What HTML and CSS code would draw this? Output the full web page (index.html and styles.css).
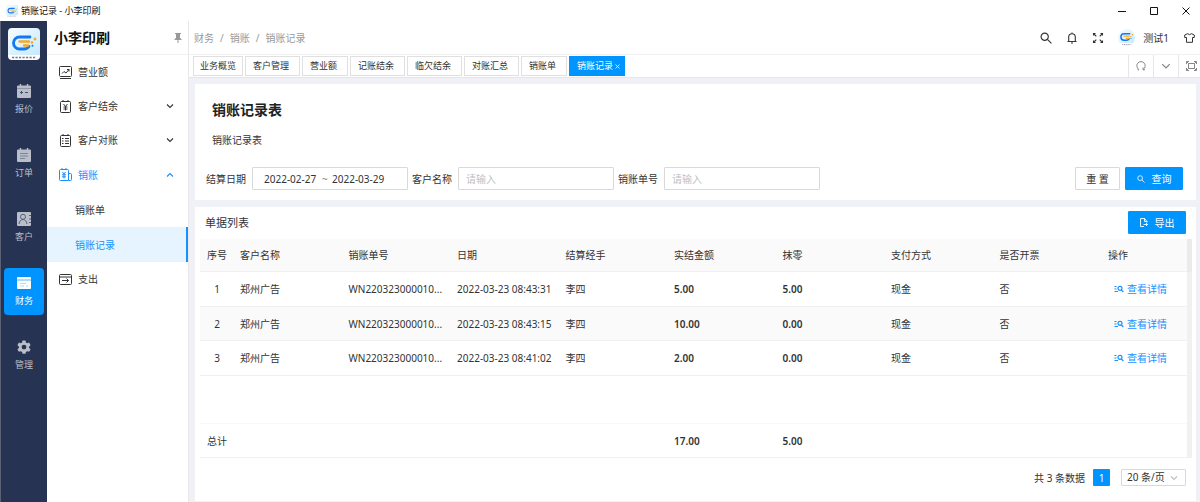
FILE: index.html
```html
<!DOCTYPE html>
<html lang="zh-CN">
<head>
<meta charset="utf-8">
<title>销账记录 - 小李印刷</title>
<link rel="stylesheet" href="styles.css">
</head>
<body>
<svg class="defs" width="0" height="0" aria-hidden="true">
  <defs>
    <linearGradient id="logo-bg" x1="0" y1="0" x2="1" y2="1">
      <stop offset="0" stop-color="#f8fdff"/><stop offset="1" stop-color="#c4e9fd"/>
    </linearGradient>
  </defs>
  <symbol id="mark" viewBox="0 0 32 32">
    <path d="M0 0h32v27H0z" fill="url(#logo-bg)"/>
    <path d="M0 27h32v5H0z" fill="#fff"/>
    <path d="M22 9H11.500a6 6 0 0 0 0 12H16c2.500 0 4-1 5-2.500" fill="none" stroke="#1677f5" stroke-width="2.800" stroke-linecap="round"/>
    <path d="M11.500 13.500H21M16 17.500h4" stroke="#f9a825" stroke-width="2.400" stroke-linecap="round" fill="none"/>
    <circle cx="24" cy="14.500" r="1.300" fill="#f9a825"/><circle cx="27" cy="11" r="1.400" fill="#f9a825"/>
    <circle cx="24.500" cy="17.800" r="1" fill="#1677f5"/>
    <path d="M4 29.500h24" stroke="#778" stroke-width="1.600" stroke-dasharray="2.200 1.300"/>
  </symbol>
  <symbol id="search" viewBox="0 0 12 12"><g fill="none" stroke="currentColor" stroke-width="1.200"><circle cx="4.700" cy="4.700" r="3.600"/><path d="M7.400 7.400l4 4"/></g></symbol>
  <symbol id="down" viewBox="0 0 8 8"><path d="M1 2.500l3 3 3-3" fill="none" stroke="currentColor" stroke-width="1.100"/></symbol>
  <symbol id="up" viewBox="0 0 8 8"><path d="M1 5.500l3-3 3 3" fill="none" stroke="currentColor" stroke-width="1.100"/></symbol>
  <symbol id="detail" viewBox="0 0 10 8"><g fill="none" stroke="currentColor" stroke-width="1.200"><path d="M.5 1.500h2M.5 4h2M.5 6.500h3.500"/><circle cx="6" cy="3.300" r="2"/><path d="M7.300 4.800l2 2.200"/></g></symbol>
</svg>

<header class="titlebar">
  <svg class="titlebar-logo"><use href="#mark"/></svg>
  <span class="titlebar-text">销账记录 - 小李印刷</span>
  <div class="window-controls">
    <button class="icon-button" aria-label="最小化"><svg width="8" height="8" viewBox="0 0 8 8"><path d="M0 4.500h8" stroke="currentColor"/></svg></button>
    <button class="icon-button" aria-label="最大化"><svg width="8" height="8" viewBox="0 0 8 8"><path d="M.5.5h7v7h-7z" fill="none" stroke="currentColor"/></svg></button>
    <button class="icon-button" aria-label="关闭"><svg width="8" height="8" viewBox="0 0 8 8"><path d="M.5.5l7 7M7.500.5l-7 7" stroke="currentColor"/></svg></button>
  </div>
</header>

<div class="app">
  <nav class="rail" aria-label="主导航">
    <svg class="rail-logo"><use href="#mark"/></svg>
    <a class="rail-item" href="#"><svg width="14" height="14" viewBox="0 0 14 14"><path d="M1 1.500h12q1 0 1 1V13q0 1-1 1H1q-1 0-1-1V2.500q0-1 1-1z" fill="currentColor"/><path d="M3.500 0v3M10.500 0v3" stroke="currentColor" stroke-width="1.500"/><path d="M0 4.500h14" stroke="#8f96a8"/><path d="M3 8.500h3M4.500 7v3M8 8.500h3" stroke="#465273"/></svg>报价</a>
    <a class="rail-item" href="#"><svg width="14" height="14" viewBox="0 0 14 14"><path d="M1 1.500h12q1 0 1 1V13q0 1-1 1H1q-1 0-1-1V2.500q0-1 1-1z" fill="currentColor"/><path d="M3.500 0v3M10.500 0v3" stroke="currentColor" stroke-width="1.500"/><path d="M3 5.500h8M3 8h8M3 10.500h5" stroke="#7b849a"/></svg>订单</a>
    <a class="rail-item" href="#"><svg width="14" height="14" viewBox="0 0 14 14"><rect width="14" height="14" rx="1" fill="currentColor"/><g fill="none" stroke="#56617f"><circle cx="6" cy="4.800" r="2.500"/><path d="M2 12c.3-3 2-4.500 4-4.500s3.700 1.500 4 4.500M12 3.500h2M12 7h2M12 10.500h2"/></g></svg>客户</a>
    <a class="rail-item rail-item-active" href="#" aria-current="page"><svg width="14" height="14" viewBox="0 0 14 14"><rect y="1" width="14" height="12" rx="1" fill="currentColor"/><path d="M0 4h14" stroke="#55b5ff"/><path d="M3 7.500h6M3 10h4M9 10h2" stroke="#a9daff"/></svg>财务</a>
    <a class="rail-item" href="#"><svg width="14" height="14" viewBox="0 0 14 14"><path fill="currentColor" fill-rule="evenodd" d="M5.500.5h3l.4 1.900 1.300.8 1.900-.6 1.500 2.600-1.500 1.300v1.400l1.500 1.300-1.500 2.600-1.900-.6-1.300.8-.4 1.800h-3l-.4-1.800-1.300-.8-1.900.6L.4 9.200l1.500-1.300V6.500L.4 5.200l1.500-2.600 1.900.6 1.300-.8zM7 4.700a2.400 2.400 0 1 0 0 4.800 2.400 2.400 0 0 0 0-4.800z"/></svg>管理</a>
  </nav>

  <aside class="sidebar">
    <div class="sidebar-head">
      <strong class="sidebar-title">小李印刷</strong>
      <button class="icon-button pin" aria-label="固定菜单"><svg width="8" height="10" viewBox="0 0 8 10"><path d="M1 0h6v1H6v4l1.500 1v1H.5V6L2 5V1H1zM3.500 7h1v3h-1z" fill="currentColor"/></svg></button>
    </div>
    <nav class="menu" aria-label="财务菜单">
      <a class="menu-item" href="#"><svg width="13" height="13" viewBox="0 0 13 13"><g fill="none" stroke="currentColor"><rect x=".5" y=".5" width="12" height="10" rx="1"/><path d="M3 7.500l2-2 2 1.500 3-3.500M8 3.500h2v2M1 12.500h11"/></g></svg>营业额</a>
      <a class="menu-item" href="#"><svg width="13" height="13" viewBox="0 0 13 13"><g fill="none" stroke="currentColor"><rect x="1.500" y="1.500" width="10" height="11" rx="1"/><path d="M4 0v2M9 0v2M4.500 4l2 2.500 2-2.500M6.500 6.500v4M4.500 7h4M4.500 9h4"/></g></svg>客户结余<svg class="menu-arrow"><use href="#down"/></svg></a>
      <a class="menu-item" href="#"><svg width="13" height="13" viewBox="0 0 13 13"><g fill="none" stroke="currentColor"><rect x="1.500" y="1.500" width="10" height="11" rx="1"/><path d="M4 0v2M9 0v2M3 4.500h1.500M6 4.500h4M3 7h1.500M6 7h4M3 9.500h1.500M6 9.500h4"/></g></svg>客户对账<svg class="menu-arrow"><use href="#down"/></svg></a>
      <a class="menu-item menu-item-open" href="#"><svg width="13" height="13" viewBox="0 0 13 13"><g fill="none" stroke="currentColor"><path d="M9.500 12.500h-8q-1 0-1-1v-9q0-1 1-1h7q1 0 1 1zM9.500 5.500h2q1 0 1 1v5q0 1-1 1h-2M3 0v2M7 0v2M3.500 4L5 6l1.500-2M5 6v4.500M3 6.800h4M3 8.800h4"/></g></svg>销账<svg class="menu-arrow"><use href="#up"/></svg></a>
      <a class="menu-item menu-sub" href="#">销账单</a>
      <a class="menu-item menu-sub menu-sub-active" href="#" aria-current="page">销账记录</a>
      <a class="menu-item" href="#"><svg width="13" height="13" viewBox="0 0 13 13"><g fill="none" stroke="currentColor"><rect x=".5" y="1.500" width="12" height="10" rx="1"/><path d="M.5 4h12M3 7.500h6.500M7.500 5.500l2 2-2 2"/></g></svg>支出</a>
    </nav>
  </aside>

  <main class="main">
    <div class="topbar">
      <nav class="breadcrumb" aria-label="面包屑"><a href="#">财务</a><span>/</span><a href="#">销账</a><span>/</span><span>销账记录</span></nav>
      <div class="topbar-tools">
        <button class="icon-button" aria-label="搜索"><svg width="12" height="12"><use href="#search"/></svg></button>
        <button class="icon-button" aria-label="通知"><svg width="12" height="12" viewBox="0 0 12 12"><path d="M1.500 9.500h9M2.700 9.500V5a3.300 3.300 0 0 1 6.600 0v4.500M6 .5v1M5 11h2" fill="none" stroke="currentColor" stroke-width="1.100"/></svg></button>
        <button class="icon-button" aria-label="全屏"><svg width="12" height="12" viewBox="0 0 12 12"><path d="M1.500 3.500v-2h2M8.500 1.500h2v2M10.500 8.500v2h-2M3.500 10.500h-2v-2M1.500 1.500L4.300 4.300M10.500 1.500L7.700 4.300M10.500 10.500L7.700 7.700M1.500 10.500l2.800-2.800" fill="none" stroke="currentColor" stroke-width="1.100"/></svg></button>
        <a class="user" href="#"><svg class="avatar"><use href="#mark"/></svg>测试1</a>
        <button class="icon-button" aria-label="主题"><svg width="11" height="10" viewBox="0 0 11 10"><path d="M3.500.7q2 1.800 4 0L10.300 2v2.500H8.500v4.800h-6V4.500H.7V2z" fill="none" stroke="currentColor"/></svg></button>
      </div>
    </div>

    <div class="tabbar">
      <nav class="tabs" aria-label="页签">
        <a class="tab tab-home" href="#">业务概览</a>
        <a class="tab" href="#">客户管理</a>
        <a class="tab" href="#">营业额</a>
        <a class="tab" href="#">记账结余</a>
        <a class="tab" href="#">临欠结余</a>
        <a class="tab" href="#">对账汇总</a>
        <a class="tab" href="#">销账单</a>
        <a class="tab tab-active" href="#" aria-current="page">销账记录<svg width="5" height="5" viewBox="0 0 5 5"><path d="M.5.5l4 4M4.500.5l-4 4" stroke="currentColor" stroke-width=".8"/></svg></a>
      </nav>
      <div class="tab-tools">
        <button class="icon-button tab-tool" aria-label="刷新"><svg width="10" height="10" viewBox="0 0 10 10"><path d="M3 8.500A4.200 4.200 0 1 1 7 8.500M7 6.500v2.300h2M3 8.800H1.500" fill="none" stroke="currentColor"/></svg></button>
        <button class="icon-button tab-tool" aria-label="更多"><svg width="10" height="10"><use href="#down"/></svg></button>
        <button class="icon-button tab-tool" aria-label="最大化内容"><svg width="11" height="10" viewBox="0 0 11 10"><path d="M.5 3V.5H3M8 .5h2.500V3M10.500 7v2.500H8M3 9.500H.5V7M2.500 2.500h6v5h-6zM.5.5l2 2M10.500.5l-2 2M.5 9.500l2-2M10.500 9.500l-2-2" fill="none" stroke="currentColor"/></svg></button>
      </div>
    </div>

    <div class="content">
      <section class="card filter-card">
        <h1 class="page-title">销账记录表</h1>
        <p class="page-note">销账记录表</p>
        <form class="filters">
          <label class="field-label" for="date-from">结算日期</label>
          <div class="control date-range">
            <input class="date-input" id="date-from" type="text" value="2022-02-27">
            <span class="date-sep">~</span>
            <input class="date-input" type="text" value="2022-03-29" aria-label="结束日期">
          </div>
          <label class="field-label" for="customer">客户名称</label>
          <input class="control" id="customer" type="text" placeholder="请输入">
          <label class="field-label" for="order-no">销账单号</label>
          <input class="control" id="order-no" type="text" placeholder="请输入">
          <div class="filter-actions">
            <button class="button" type="reset">重 置</button>
            <button class="button button-primary" type="button"><svg width="8" height="8"><use href="#search"/></svg>查询</button>
          </div>
        </form>
      </section>

      <section class="card list-card">
        <div class="list-head">
          <h2 class="list-title">单据列表</h2>
          <button class="button button-primary" type="button"><svg width="8" height="9" viewBox="0 0 8 9"><path d="M7 3.500L4.500.5H.5v8H4M4.500.5v3H7v1M3.500 6.500h4M6 5l1.500 1.500L6 8" fill="none" stroke="currentColor" stroke-width=".9"/></svg>导出</button>
        </div>
        <div class="table-wrap">
          <table class="table">
            <thead>
              <tr><th class="col-index">序号</th><th>客户名称</th><th>销账单号</th><th>日期</th><th>结算经手</th><th>实结金额</th><th>抹零</th><th>支付方式</th><th>是否开票</th><th class="col-action">操作</th></tr>
            </thead>
            <tbody>
              <tr><td class="col-index">1</td><td>郑州广告</td><td>WN220323000010...</td><td>2022-03-23 08:43:31</td><td>李四</td><td class="amount">5.00</td><td class="amount">5.00</td><td>现金</td><td>否</td><td class="col-action"><a class="detail-link" href="#"><svg width="10" height="8"><use href="#detail"/></svg>查看详情</a></td></tr>
              <tr><td class="col-index">2</td><td>郑州广告</td><td>WN220323000010...</td><td>2022-03-23 08:43:15</td><td>李四</td><td class="amount">10.00</td><td class="amount">0.00</td><td>现金</td><td>否</td><td class="col-action"><a class="detail-link" href="#"><svg width="10" height="8"><use href="#detail"/></svg>查看详情</a></td></tr>
              <tr><td class="col-index">3</td><td>郑州广告</td><td>WN220323000010...</td><td>2022-03-23 08:41:02</td><td>李四</td><td class="amount">2.00</td><td class="amount">0.00</td><td>现金</td><td>否</td><td class="col-action"><a class="detail-link" href="#"><svg width="10" height="8"><use href="#detail"/></svg>查看详情</a></td></tr>
              <tr class="filler" aria-hidden="true"><td colspan="10"></td></tr>
            </tbody>
            <tfoot>
              <tr><td class="col-index">总计</td><td></td><td></td><td></td><td></td><td class="amount">17.00</td><td class="amount">5.00</td><td></td><td></td><td></td></tr>
            </tfoot>
          </table>
          <div class="scroll-gutter" aria-hidden="true"></div>
        </div>
        <div class="pagination">
          <span>共 3 条数据</span>
          <button class="page-button" type="button" aria-current="page">1</button>
          <div class="page-size">
            <select class="page-select" aria-label="每页条数"><option>20 条/页</option></select>
            <svg class="page-arrow"><use href="#down"/></svg>
          </div>
        </div>
      </section>
    </div>
  </main>
</div>
</body>
</html>
```

FILE: styles.css
```css
* { box-sizing: border-box; }

body {
  margin: 0;
  min-height: 100vh;
  display: flex;
  flex-direction: column;
  font: 10px/16px "Noto Sans", "Noto Sans CJK SC", sans-serif;
  color: #333;
  background: #fff;
}

a { color: inherit; text-decoration: none; }
button, input, select { font: inherit; color: inherit; }
svg { display: block; flex: none; }
.defs { position: absolute; }

.icon-button {
  display: flex;
  align-items: center;
  justify-content: center;
  padding: 0;
  border: 0;
  background: none;
}

/* Window title bar */
.titlebar {
  display: flex;
  align-items: center;
  height: 21px;
  padding: 0 10px 0 6px;
  font-size: 9px;
  color: #111;
}
.titlebar-logo { width: 12px; height: 12px; margin-right: 3px; }
.window-controls { display: flex; gap: 24px; margin-left: auto; }

.app { flex: 1; display: flex; }

/* Dark navigation rail */
.rail {
  flex: none;
  width: 47px;
  padding-top: 7px;
  display: flex;
  flex-direction: column;
  align-items: center;
  gap: 17px;
  border-left: 1px solid #5b6275;
  background: #273352;
}
.rail-logo { width: 32px; height: 32px; border-radius: 4px; }
.rail-item {
  width: 40px;
  height: 47px;
  display: flex;
  flex-direction: column;
  align-items: center;
  justify-content: center;
  gap: 4px;
  border-radius: 4px;
  font-size: 9px;
  line-height: 14px;
  color: #b9bec9;
}
.rail-item-active { color: #fff; background: #0094ff; }
.rail-logo + .rail-item { margin-top: -1px; }

/* Sidebar menu */
.sidebar { flex: none; width: 142px; border-right: 1px solid #e8e8e8; }
.sidebar-head {
  height: 34px;
  padding: 0 6px 0 7px;
  display: flex;
  align-items: center;
  justify-content: space-between;
  border-bottom: 1px solid #f0f0f0;
}
.sidebar-title { font-size: 14px; color: #111; }
.pin { color: #999; }
.menu-item {
  display: flex;
  align-items: center;
  gap: 6px;
  height: 34px;
  padding: 0 14px 0 12px;
}
.menu-item-open { height: 35px; color: #1890ff; }
.menu-arrow { width: 8px; height: 8px; margin-left: auto; }
.menu-sub { height: 35px; padding-left: 28px; }
.menu-sub-active {
  color: #1890ff;
  background: #e6f4ff;
  border-right: 2px solid #1890ff;
}

/* Top bar */
.main { flex: 1; min-width: 0; display: flex; flex-direction: column; }
.topbar {
  height: 34px;
  padding: 0 5px;
  display: flex;
  align-items: center;
  justify-content: space-between;
  border-bottom: 1px solid #f0f0f0;
}
.breadcrumb { display: flex; gap: 6px; color: #999; }
.topbar-tools { display: flex; align-items: center; gap: 14px; }
.user { display: flex; align-items: center; gap: 8px; margin-right: 1px; }
.avatar { width: 17px; height: 17px; border-radius: 50%; }

/* Page tabs */
.tabbar {
  height: 23px;
  padding-left: 4px;
  display: flex;
  justify-content: space-between;
  border-bottom: 1px solid #e4e6ea;
}
.tabs { display: flex; align-items: center; gap: 2px; }
.tab {
  display: flex;
  align-items: center;
  gap: 2px;
  height: 20px;
  padding: 0 10px 0 7px;
  border: 1px solid #e0e0e0;
  font-size: 9px;
  white-space: nowrap;
}
.tab-home { padding: 0 6px; }
.tab-active { padding-right: 4px; color: #fff; border-color: #0094ff; background: #0094ff; }
.tab-tools { display: flex; color: #888; }
.tab-tool { width: 25px; border-left: 1px solid #e6e6e6; }
.tab-tool:last-child { width: 22px; padding-left: 4px; }

/* Content cards */
.content {
  flex: 1;
  display: flex;
  flex-direction: column;
  gap: 7px;
  padding: 6px 4px 1px 6px;
  background: #eff1f6;
}
.card { background: #fff; }
.filter-card { padding: 16px 13px 10px 11px; }
.page-title { margin: 0 0 12px 6px; font-size: 14px; line-height: 20px; color: #222; }
.page-note { margin: 0 0 19px 6px; }

.filters { display: flex; align-items: center; }
.field-label { margin-right: 6px; white-space: nowrap; }
.control {
  flex: 0 1 156px;
  min-width: 0;
  height: 23px;
  margin-right: 4px;
  padding: 0 7px;
  border: 1px solid #d9d9d9;
  border-radius: 1px;
  background: #fff;
}
.control::placeholder { color: #bfbfbf; }
.date-range { display: flex; align-items: center; padding-left: 11px; }
.date-input { width: 55px; padding: 0; border: 0; background: none; }
.date-sep { width: 13px; padding-left: 3px; color: #888; }
.filter-actions { display: flex; gap: 5px; margin-left: auto; }

.button {
  display: flex;
  align-items: center;
  justify-content: center;
  gap: 7px;
  min-width: 45px;
  height: 23px;
  padding: 0;
  border: 1px solid #d9d9d9;
  border-radius: 1px;
  background: #fff;
}
.button-primary { min-width: 58px; color: #fff; border-color: #0094ff; background: #0094ff; }

/* Record list */
.list-card { flex: 1; padding: 4px 4px 0 5px; }
.list-head {
  display: flex;
  align-items: center;
  justify-content: space-between;
  padding: 0 6px 5px 5px;
}
.list-title { margin: 0; font-size: 11px; font-weight: 400; }

.table-wrap { display: flex; }
.table { flex: 1; width: 100%; table-layout: fixed; border-collapse: separate; border-spacing: 0; }
.table th, .table td {
  height: 34px;
  padding: 0 0 0 6px;
  font-weight: 400;
  text-align: left;
  white-space: nowrap;
  border-bottom: 1px solid #f0f0f0;
}
.table th { height: 33px; background: #fafafa; }
.table tbody td { height: 35px; }
.table tbody tr:nth-child(2) td { height: 34px; background: #fafafa; }
.table .filler td { height: 48px; border-color: #f8f8f8; }
.table .col-index { width: 34px; padding: 0; text-align: center; }
.table .col-action { width: 85px; }
.table .amount { font-weight: 600; }
.detail-link { display: flex; align-items: center; gap: 3px; padding-left: 6px; color: #1890ff; }
.scroll-gutter { width: 5px; background: #f1f1f1; border-top: 33px solid #ebebeb; }

.pagination {
  display: flex;
  align-items: center;
  justify-content: flex-end;
  padding: 11px 6px 0 0;
}
.page-button {
  width: 17px;
  height: 17px;
  margin: 0 11px 0 8px;
  padding: 0;
  border: 0;
  border-radius: 1px;
  color: #fff;
  background: #0094ff;
}
.page-size { display: grid; align-items: center; }
.page-select {
  grid-area: 1 / 1;
  appearance: none;
  width: 65px;
  height: 17px;
  padding: 0 5px;
  border: 1px solid #d9d9d9;
  border-radius: 1px;
  background: #fff;
  line-height: 15px;
}
.page-arrow {
  grid-area: 1 / 1;
  justify-self: end;
  width: 8px;
  height: 8px;
  margin-right: 8px;
  color: #bfbfbf;
  pointer-events: none;
}
```
